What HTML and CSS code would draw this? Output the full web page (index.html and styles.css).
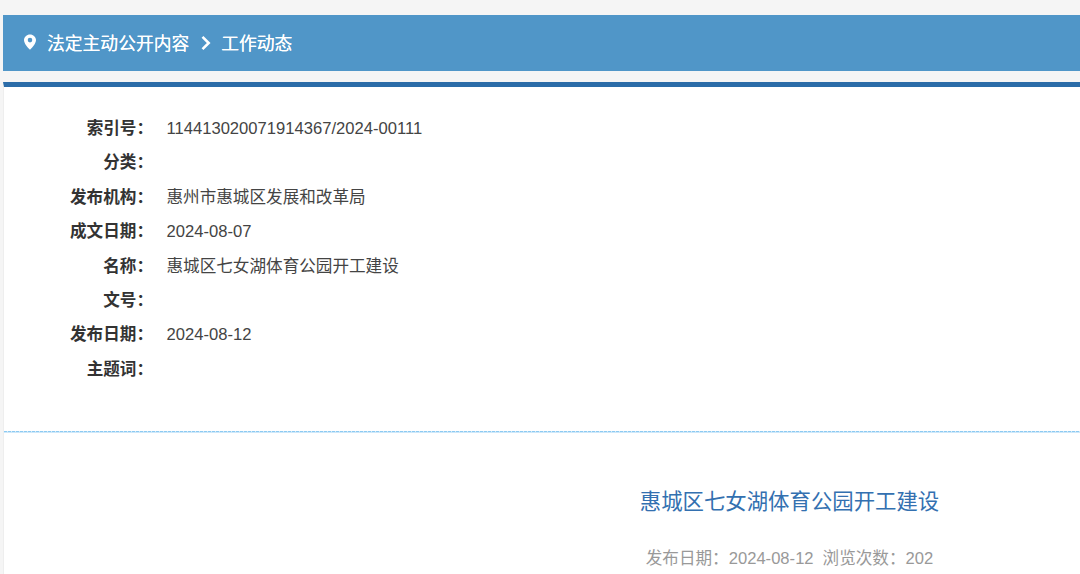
FILE: index.html
```html
<!DOCTYPE html>
<html lang="zh-CN">
<head>
<meta charset="utf-8">
<title>惠城区七女湖体育公园开工建设</title>
<link rel="stylesheet" href="styles.css">
</head>
<body>
<div class="page">
  <nav class="crumb">
    <svg class="pin" viewBox="0 0 12 16" width="12" height="16"><path fill="#fff" fill-rule="evenodd" d="M6 .5C2.700.5 0 3 0 6c0 3.300 3.500 7.500 6 9.800 2.500-2.300 6-6.500 6-9.800C12 3 9.300.5 6 .5zm0 3.300a2.300 2.300 0 1 1 0 4.600 2.300 2.300 0 0 1 0-4.600z"/></svg>
    <span class="crumb-text">法定主动公开内容</span>
    <svg class="chev" viewBox="0 0 12 16" width="12" height="16"><path fill="none" stroke="#fff" stroke-width="2.600" d="M2.500 1.800 8.700 8 2.500 14.200"/></svg>
    <span class="crumb-text">工作动态</span>
  </nav>
  <main class="panel">
    <dl class="meta">
      <div class="row"><dt>索引号&#xFF1A;</dt><dd>114413020071914367/2024-00111</dd></div>
      <div class="row"><dt>分类&#xFF1A;</dt><dd></dd></div>
      <div class="row"><dt>发布机构&#xFF1A;</dt><dd>惠州市惠城区发展和改革局</dd></div>
      <div class="row"><dt>成文日期&#xFF1A;</dt><dd>2024-08-07</dd></div>
      <div class="row"><dt>名称&#xFF1A;</dt><dd>惠城区七女湖体育公园开工建设</dd></div>
      <div class="row"><dt>文号&#xFF1A;</dt><dd></dd></div>
      <div class="row"><dt>发布日期&#xFF1A;</dt><dd>2024-08-12</dd></div>
      <div class="row"><dt>主题词&#xFF1A;</dt><dd></dd></div>
    </dl>
    <article class="article">
      <h1>惠城区七女湖体育公园开工建设</h1>
      <p class="info"><span>发布日期&#xFF1A;2024-08-12</span><span>浏览次数&#xFF1A;202</span></p>
    </article>
  </main>
</div>
</body>
</html>
```
FILE: styles.css
```css
html, body { margin: 0; padding: 0; height: 574px; overflow: hidden; }
body { background: #f5f5f5; font-family: "Liberation Sans", "Noto Sans CJK SC", sans-serif; }
.page { padding: 15px 0 0 3px; }
.crumb { height: 56px; box-sizing: border-box; padding: 0 0 2px 21px; background: #5096c8; color: #fff; display: flex; align-items: center; font-size: 17.8px; }
.crumb-text { text-shadow: 0 0 .4px #fff; }
.pin { margin-right: 11px; }
.chev { margin: 2px 9px 0 11px; }
.panel { margin-top: 11px; background: #fff; border-top: 5px solid #2b6ca8; border-left: 1px solid #eee; height: 492px; }
.meta { margin: 0; height: 345px; padding-top: 25px; box-sizing: border-box; background: repeating-linear-gradient(90deg, #8ccaf2 0 3px, #d6ecfa 3px 4px) left bottom / 100% 1px no-repeat; }
.row { display: flex; height: 34.4px; line-height: 34px; font-size: 16.6px; color: #444; }
dt { width: 149px; text-align: right; font-weight: bold; color: #333; }
dd { margin: 0 0 0 13.5px; }
.article { text-align: center; padding-left: 495px; border-top: 1px solid #cfe8f9; }
h1 { margin: 54px 0 0; font-size: 21.4px; font-weight: normal; line-height: 30px; color: #3370b0; }
.info { margin: 30px 0 0; font-size: 16.6px; line-height: 24px; color: #999; display: flex; justify-content: center; gap: 9px; }
```
